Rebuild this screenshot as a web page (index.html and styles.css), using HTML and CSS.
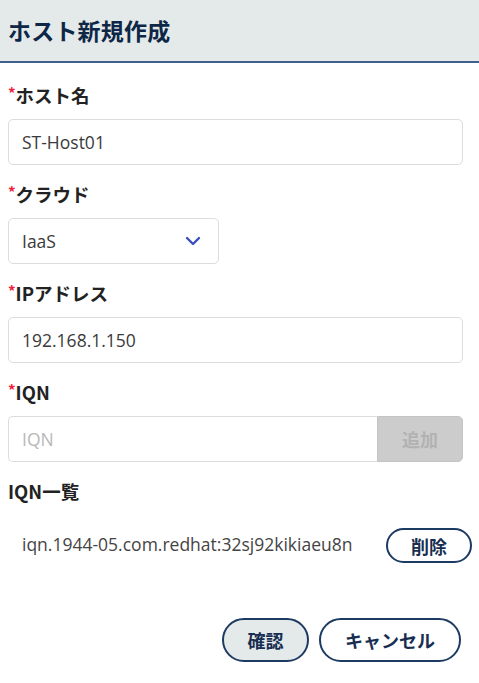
FILE: index.html
```html
<!DOCTYPE html>
<html lang="ja">
<head>
<meta charset="utf-8">
<title>ホスト新規作成</title>
<link rel="stylesheet" href="styles.css">
</head>
<body>
<header class="header">
  <h1 class="title">ホスト新規作成</h1>
</header>
<main class="form">
  <div class="field">
    <label class="label"><span class="req">*</span>ホスト名</label>
    <div class="input">ST-Host01</div>
  </div>
  <div class="field">
    <label class="label"><span class="req">*</span>クラウド</label>
    <div class="input select">
      <span>IaaS</span>
      <svg class="chev" width="16" height="10" viewBox="0 0 16 10"><path d="M2 2 L8 8 L14 2" fill="none" stroke="#3b4fc4" stroke-width="2.4" stroke-linecap="round" stroke-linejoin="round"/></svg>
    </div>
  </div>
  <div class="field">
    <label class="label"><span class="req">*</span>IPアドレス</label>
    <div class="input">192.168.1.150</div>
  </div>
  <div class="field">
    <label class="label"><span class="req">*</span>IQN</label>
    <div class="group">
      <div class="input group-input placeholder">IQN</div>
      <button class="add">追加</button>
    </div>
  </div>
  <div class="field">
    <label class="label">IQN一覧</label>
    <div class="item">
      <span class="item-text">iqn.1944-05.com.redhat:32sj92kikiaeu8n</span>
      <button class="pill del">削除</button>
    </div>
  </div>
  <div class="footer">
    <button class="pill confirm">確認</button>
    <button class="pill cancel">キャンセル</button>
  </div>
</main>
</body>
</html>
```

FILE: styles.css
```css
* { box-sizing: border-box; }
html, body { margin: 0; padding: 0; background: #fff; }
body {
  font-family: "Open Sans", "Noto Sans CJK JP", sans-serif;
  color: #2a2a2a;
  width: 479px;
}
.header {
  height: 63px;
  background: #e4e9ea;
  border-bottom: 2px solid #3f5f8d;
  display: flex;
  align-items: center;
  padding: 0 8px 2px;
}
.title {
  margin: 0;
  font-family: "Noto Sans CJK JP", sans-serif;
  font-size: 23px;
  font-weight: 700;
  color: #0e2746;
  letter-spacing: 0.2px;
}
.form {
  padding: 22px 16px 0 8px;
  display: flex;
  flex-direction: column;
}
.field {
  display: flex;
  flex-direction: column;
  margin-bottom: 19px;
}
.label {
  height: 24px;
  line-height: 20px;
  padding-bottom: 4px;
  font-family: "Noto Sans CJK JP", sans-serif;
  font-size: 18.5px;
  font-weight: 700;
  color: #222;
  margin-bottom: 10px;
  display: flex;
  align-items: center;
}
.req {
  color: #f0203a;
  font-size: 15px;
  align-self: flex-start;
  line-height: 16px;
}
.input {
  height: 46px;
  border: 1px solid #dcdcdc;
  border-radius: 5px;
  padding: 0 13px;
  display: flex;
  align-items: center;
  font-size: 17.5px;
  color: #3a3a3a;
  background: #fff;
}
.select {
  width: 211px;
  justify-content: space-between;
  padding-right: 17px;
}
.chev { display: block; }
.group { display: flex; }
.group-input {
  flex: 1;
  border-radius: 5px 0 0 5px;
  border-right: none;
}
.placeholder { color: #b8b8b8; }
.add {
  width: 86px;
  height: 46px;
  border: 1px solid #c4c4c4;
  border-radius: 0 5px 5px 0;
  background: #cccccc;
  color: #b2b2b2;
  font-family: "Noto Sans CJK JP", sans-serif;
  font-size: 18px;
  font-weight: 700;
  padding: 0;
}
.item {
  display: flex;
  justify-content: space-between;
  align-items: center;
  padding-left: 14px;
  margin-right: -9px;
  margin-top: 13px;
  height: 35px;
}
.item-text {
  font-size: 17.5px;
  color: #444;
  margin-top: -4px;
}
.pill {
  border: 2px solid #1d3a63;
  border-radius: 22px;
  background: #fff;
  font-family: "Noto Sans CJK JP", sans-serif;
  font-weight: 700;
  font-size: 18px;
  color: #172e50;
  padding: 0;
}
.del { width: 86px; height: 35px; }
.footer {
  display: flex;
  justify-content: flex-end;
  gap: 10px;
  margin-top: 36px;
  margin-right: 2px;
}
.confirm { width: 87px; height: 44px; background: #e4e9ea; }
.cancel { width: 142px; height: 44px; }
```
